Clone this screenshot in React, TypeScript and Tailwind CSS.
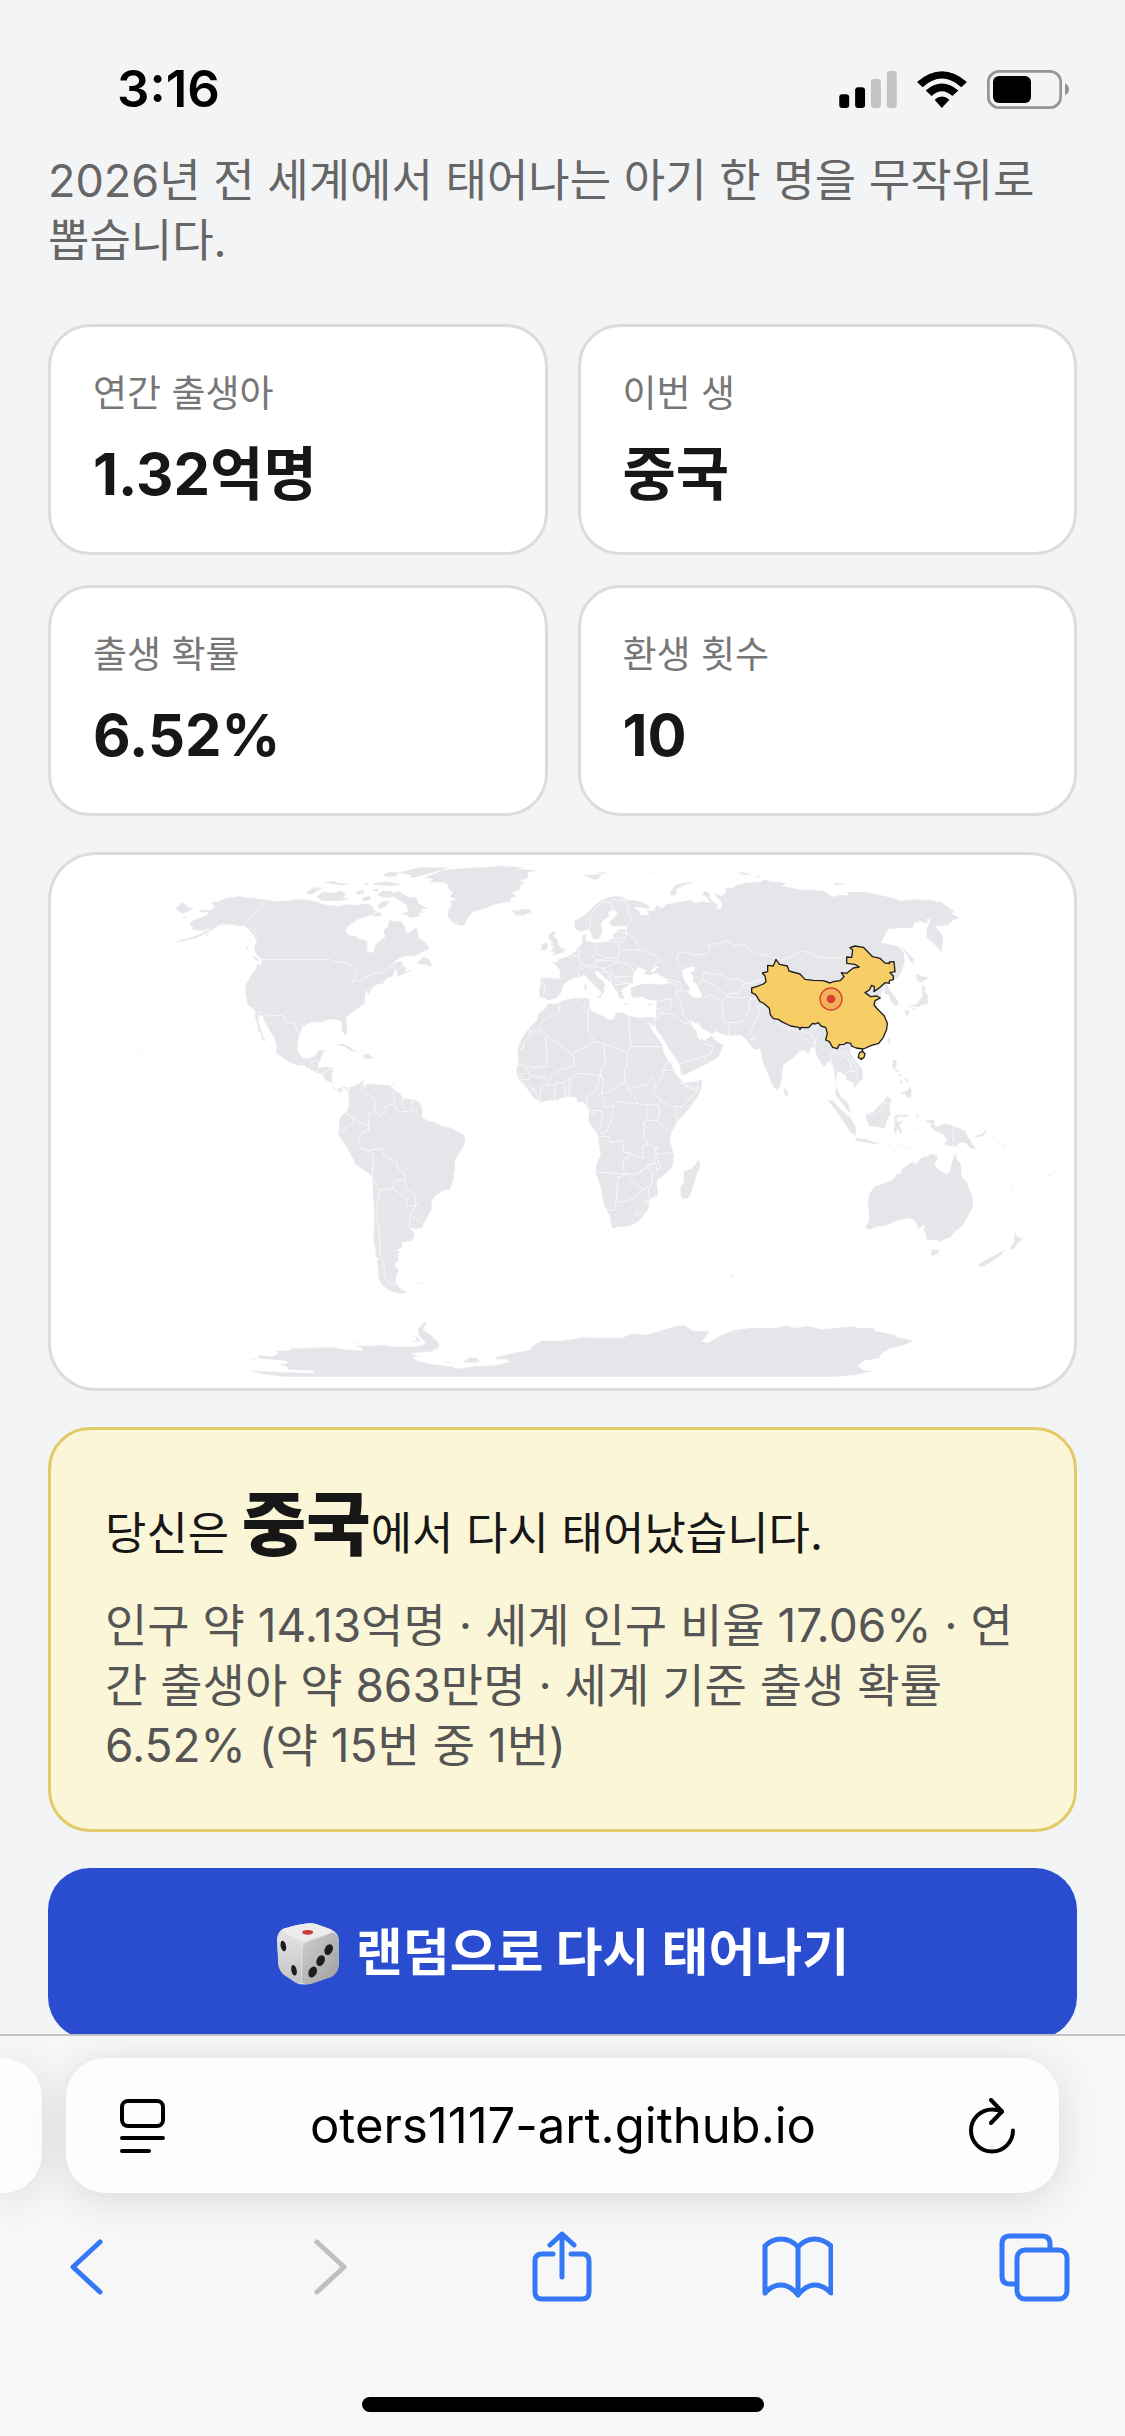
import type { ReactNode } from "react";

type Stat = { label: string; value: string };

const stats: Stat[] = [
	{ label: "연간 출생아", value: "1.32억명" },
	{ label: "이번 생", value: "중국" },
	{ label: "출생 확률", value: "6.52%" },
	{ label: "환생 횟수", value: "10" },
];

const northAmerica = [
	"M500,148L475,146 460,143 430,142 420,137 405,141 375,145 355,154 333,157 338,165 345,171 332,179 300,180 295,185 325,188 318,196 300,203 285,208 275,214 268,224 278,230 272,238 300,242 312,243 320,238 330,238 305,250 275,262 240,270 220,278 250,274 290,264 320,250 335,240 350,230 375,218 362,230 385,222 410,228 428,228 445,238 462,258 470,275 462,290 465,305 470,316 485,328 482,347 472,340 468,355 450,380 435,410 438,440 443,466 462,478 465,490 466,508 474,530 472,540 482,548 486,566 498,580 490,558 482,534 475,510 476,496 488,497 492,512 504,532 512,548 522,562 530,590 528,608 545,622 570,638 595,648 610,646 630,658 650,668 665,672 676,692 694,698 702,716 715,722 720,730 730,714 740,718 745,728 745,712 730,710 712,718 700,710 695,695 697,675 700,655 680,650 655,652 655,640 662,628 668,612 678,598 655,602 645,618 620,626 605,622 592,600 595,570 600,550 608,530 635,516 660,518 675,512 700,508 720,512 725,520 725,540 735,558 741,552 742,535 738,505 750,492 775,475 795,460 795,440 799,420 805,435 818,412 830,404 848,402 860,385 880,378 882,364 892,365 890,378 912,372 938,360 915,364 920,355 908,345 905,332 890,335 870,350 890,330 910,320 945,318 965,308 987,298 985,288 975,275 958,265 955,250 948,232 930,247 918,247 915,230 905,214 885,213 868,210 862,232 850,240 855,262 835,275 825,285 822,302 812,310 802,300 802,272 780,268 765,258 745,255 737,240 750,225 775,208 800,200 815,196 830,185 820,178 815,165 795,160 770,165 740,163 715,168 685,165 660,160 655,155 625,150 590,148 560,152 525,154Z",
	"M970,82L1000,72 1030,60 1080,55 1150,52 1200,47 1270,52 1255,57 1315,61 1285,68 1283,85 1262,92 1275,98 1258,110 1262,118 1236,128 1250,138 1230,148 1235,155 1190,162 1150,178 1120,185 1103,205 1095,222 1085,228 1060,220 1043,200 1045,180 1055,162 1048,155 1068,148 1048,140 1058,128 1046,118 1044,105 1032,98 985,96 1000,88Z",
	"M890,68L960,52 1050,52 1010,66 970,75 950,82 925,84 935,76Z",
	"M832,136L845,122 870,122 885,128 895,122 925,140 950,142 955,160 985,176 965,178 970,190 955,188 960,198 930,205 920,196 900,192 925,184 918,165 895,150 880,140 860,145Z",
	"M650,140L665,126 700,128 722,122 738,132 728,142 750,148 710,154 665,152Z",
	"M616,130L640,112 668,114 655,122 635,134Z M670,98L700,92 715,98 758,102 720,106Z M790,102L812,95 800,108Z M815,100L860,94 910,104 870,108 825,106Z M848,74L870,64 900,68 885,80 860,82Z M765,125L790,118 795,128 775,134Z M785,145L810,136 812,150 790,154Z M812,120L838,114 830,126Z M830,168L850,152 872,155 855,172 838,178Z M815,198L835,184 848,196 828,200Z",
	"M225,176L248,156 266,172 280,173 270,182 248,192Z M250,200L262,202 255,206Z M270,137L285,134 278,139Z M310,256L330,250 322,257Z M440,288L446,284 444,295 439,299Z M455,316L470,322 480,336 466,330Z",
	"M980,308L972,322 985,325 997,345 990,350 975,343 950,342Z M890,378L915,364 940,360 915,370 893,382Z",
	"M700,588L725,580 745,588 755,596 776,606 752,604 735,590 712,586Z M790,612L805,612 826,625 803,628 788,624Z M748,626L760,628 750,629Z M838,625L848,626 840,628Z M755,545L760,548 756,552Z M112,608L121,612 114,616Z M878,700L884,702 878,706Z",
	"M1235,178L1248,184 1265,177 1290,178 1296,186 1270,197 1244,194Z",
];

const southAmerica = [
	"M145,92L150,82 178,70 196,58 190,72 194,85 200,72 215,70 235,74 270,75 285,92 300,100 310,116 340,118 358,125 368,150 366,172 385,182 410,188 425,198 450,202 470,212 490,222 497,240 494,255 478,280 465,300 465,330 460,362 450,388 430,392 405,408 395,422 395,448 378,480 365,504 350,507 330,505 344,520 342,535 330,544 305,548 308,562 290,570 300,574 294,585 296,604 284,612 288,622 298,630 290,645 288,665 300,685 324,698 300,702 270,694 245,675 234,650 234,625 230,605 236,595 228,590 225,560 219,540 222,500 222,440 218,400 217,350 200,336 165,312 158,295 140,262 125,238 113,222 118,205 115,192 122,170 135,158 146,140 145,110Z",
	"M348,668L368,668 355,672Z M1290,645L1302,646 1294,651Z M278,70L284,72 278,76Z",
];

const africa = [
	"M205,460L230,462 240,455 262,448 280,445 310,444 328,445 328,460 332,480 350,490 370,498 385,508 400,508 408,488 425,487 445,497 480,503 505,500 522,502 525,515 520,530 505,515 520,545 538,570 550,590 552,610 575,645 592,680 605,688 612,698 640,695 668,688 665,715 650,745 620,785 595,810 575,845 570,870 578,900 582,915 580,945 565,965 535,988 530,1000 535,1035 510,1048 507,1075 480,1110 465,1122 440,1130 415,1130 403,1137 394,1130 390,1100 370,1060 362,1010 345,965 350,940 362,915 355,870 350,850 325,815 328,780 320,765 308,755 295,758 285,742 260,740 225,752 205,752 183,758 155,738 130,700 115,690 108,660 115,640 112,598 125,565 150,530 170,512 175,490 195,475Z",
	"M655,922L662,948 652,970 632,1035 622,1046 608,1047 601,1035 602,1010 612,995 610,965 635,955 648,940Z",
];

const eurasia = [
	"M283,210L300,205 325,185 350,160 375,145 405,138 430,140 440,150 460,150 490,157 510,170 505,177 480,172 462,172 478,182 482,194 507,196 500,180 520,183 530,165 545,175 558,163 580,158 600,155 635,150 640,158 660,158 655,152 690,158 678,140 665,135 675,122 690,132 690,145 700,155 715,165 710,178 725,172 724,155 708,140 705,128 725,138 738,125 735,112 755,115 770,105 800,98 840,95 855,88 870,94 900,96 922,100 905,108 960,118 1000,120 1030,122 1055,138 1065,140 1075,135 1105,136 1100,126 1160,126 1200,135 1240,144 1260,152 1310,148 1350,150 1382,155 1400,168 1425,187 1412,190 1440,205 1420,210 1405,225 1380,228 1362,228 1350,208 1338,208 1345,215 1335,222 1322,214 1303,220 1298,235 1270,234 1225,238 1203,278 1215,280 1235,285 1255,288 1272,310 1275,335 1265,365 1250,388 1235,390 1220,402 1230,420 1245,440 1257,458 1252,467 1240,465 1230,448 1225,435 1212,430 1215,405 1150,560 1112,598 1112,610 1132,638 1148,660 1149,685 1135,700 1122,716 1120,700 1100,690 1095,675 1078,665 1072,672 1066,700 1072,718 1085,742 1105,760 1112,788 1098,778 1085,758 1066,735 1065,690 1060,655 1048,632 1032,650 1020,635 1008,612 1005,595 995,590 985,612 972,600 958,605 945,620 910,645 905,690 900,712 892,722 880,710 862,670 848,635 840,597 825,600 812,588 800,570 780,555 745,558 718,550 710,543 695,552 665,535 655,520 645,520 632,510 640,532 650,545 652,562 664,570 664,560 672,572 695,555 698,560 705,570 732,586 722,605 715,622 685,640 640,662 608,678 602,668 600,650 590,630 572,605 550,568 530,540 522,520 528,500 528,480 530,452 505,450 485,440 460,445 452,432 452,415 470,405 500,400 530,402 560,395 540,380 455,400 430,415 425,425 435,448 418,445 412,425 405,420 395,400 375,385 355,365 345,362 350,378 372,396 378,412 370,412 374,425 362,440 362,425 345,408 325,390 315,375 300,382 285,384 265,392 250,405 245,425 230,445 205,452 195,445 180,443 177,420 183,400 180,385 205,382 238,385 240,362 232,350 216,336 235,335 235,328 260,320 280,308 298,288 306,282 306,258 318,250 318,262 316,272 345,278 380,275 398,266 400,252 412,245 412,238 440,236 440,228 415,228 395,230 388,215 405,200 412,185 395,180 385,188 388,200 368,212 362,228 370,240 362,255 360,265 340,270 328,238 300,245 285,238Z",
	"M207,252L218,243 228,246 220,258 230,265 240,290 257,298 250,308 235,312 210,318 225,308 212,304 222,292 212,285 218,278 205,265Z M182,284L200,277 205,288 198,300 178,303 185,294Z",
	"M308,72L335,74 360,72 365,78 345,90 330,85Z M345,67L395,69 365,73Z M374,84L382,84 376,87Z M510,67L530,66 520,69Z M568,130L585,105 610,98 650,94 612,106 590,118 590,135 575,137Z M765,64L800,68 815,76 790,75Z M825,78L850,78 830,83Z M1060,98L1105,103 1065,106Z M1125,104L1143,107 1130,108Z M1360,135L1365,137 1358,137Z",
	"M345,437L366,436 362,446Z M313,402L320,402 319,422 313,420Z M314,390L319,390 317,398Z M433,458L452,462 436,464Z M502,462L518,459 508,468Z",
	"M910,710L922,722 925,738 915,742Z",
];

const oceania = [
	"M508,1030L525,1008 545,1002 578,990 590,972 602,970 605,958 622,945 635,936 650,942 658,928 670,920 688,918 684,910 715,918 712,928 703,945 715,958 740,973 750,965 755,935 767,908 772,930 782,938 785,980 800,995 808,1018 820,1045 818,1070 805,1098 785,1130 765,1145 750,1163 735,1168 715,1177 712,1168 695,1172 678,1168 677,1150 670,1140 675,1122 655,1138 650,1125 642,1110 625,1105 585,1115 555,1128 530,1130 508,1140 494,1130 502,1125 508,1100 503,1060Z",
	"M695,1197L720,1200 712,1212 693,1222Z M945,1140L951,1160 970,1168 952,1180 945,1195 925,1200 938,1182 942,1170Z M915,1198L905,1215 875,1235 845,1252 831,1245 860,1228 890,1212Z",
	"M677,812L695,808 705,812 702,825 712,830 735,820 760,828 795,842 805,862 830,900 812,895 795,878 778,878 770,890 745,888 730,882 742,870 728,852 705,842 690,830 695,820 682,820Z",
	"M497,792L520,786 535,768 550,755 562,737 576,750 568,768 573,792 560,812 555,837 530,830 508,830 500,812Z M382,750L398,752 430,785 450,800 468,830 468,858 450,845 425,808 405,778Z M463,862L500,868 542,882 520,882 470,874Z",
	"M582,800L590,795 627,793 622,800 592,800 590,815 612,810 598,825 608,848 600,850 592,835 586,854 580,838 585,822Z M558,884L580,886 560,888Z M590,886L615,885 600,889Z M610,898L642,885 628,893Z M578,895L590,898 580,898Z M652,785L656,795 653,808 649,795Z M640,834L675,832 660,836Z",
	"M577,628L590,630 590,645 585,655 600,662 590,665 578,655Z M604,728L620,722 628,710 636,722 632,745 620,742 615,730 605,735Z M565,715L580,698 568,714Z M590,670L605,675 598,680Z M608,680L625,690 622,698Z M600,685L610,700 602,702Z",
	"M665,405L675,408 676,425 685,440 683,462 665,465 655,472 645,468 622,474 635,465 648,462 660,448 668,440 665,420Z M648,370L665,378 686,382 665,398 650,390Z M612,480L628,482 625,498 618,497Z M635,473L648,472 640,480Z M602,288L625,310 642,328 640,338 652,352 632,335 622,318Z M680,235L692,208 705,225 715,240 730,262 725,307 705,285 680,262Z M565,560L571,565 569,585 563,575Z",
	"M820,858L845,852 855,842 845,830 860,845 850,858 830,862Z M875,850L882,865 876,858Z M890,868L905,878 895,876Z M905,880L925,892 912,888Z M928,1000L945,1016 935,1012Z M1043,972L1055,970 1046,977Z M1055,965L1067,961 1060,967Z M960,945L964,955 961,952Z M92,1274L103,1276 94,1281Z",
];

const antarctica = [
	"M30,212L110,217 168,218 172,213 112,209 108,200 88,193 110,190 108,184 80,180 44,176 38,166 75,168 90,160 80,154 115,150 120,145 215,142 240,148 282,152 280,144 262,136 300,138 325,134 345,139 395,140 420,136 428,125 412,108 410,88 425,66 432,66 422,88 440,104 460,132 456,145 440,155 395,160 412,170 398,172 405,180 440,192 490,200 503,206 540,198 590,196 620,186 615,178 588,178 590,172 610,165 640,156 670,150 672,140 695,122 740,122 790,112 880,114 905,100 935,104 970,92 1005,77 1025,76 1045,92 1082,94 1075,110 1065,124 1078,128 1110,105 1140,90 1180,83 1235,84 1260,75 1275,84 1312,78 1340,88 1420,78 1422,84 1460,84 1465,93 1510,104 1515,112 1553,121 1535,134 1500,146 1480,160 1475,175 1440,182 1425,196 1435,210 1460,213 1420,225 1370,231 105,231 60,224 22,213Z",
	"M390,124L408,120 400,102 416,120 412,125Z M262,126L288,127 270,129Z M442,58L450,54 447,58Z M512,188L530,172 545,173 554,183 545,188Z M465,188L482,184 485,189Z M22,174L45,178 30,179Z M172,139L190,139 180,141Z",
];

const northAmericaBorders = [
	"M500,148L430,226 445,238 462,232 465,252 475,265 463,276",
	"M485,328L690,328 695,333 735,338 755,348 768,362 768,380 755,398 790,388 822,370 855,366 868,350 885,348 885,365",
	"M462,487L480,486 510,498 548,496 555,510 568,520 582,516 592,545 602,552",
	"M628,655L632,640 642,632 655,630 M650,665L660,652 M665,672L685,660 697,658 M678,692L690,697",
];

const southAmericaBorders = [
	"M195,62L183,80 188,100 222,112 226,155 240,165 260,156 252,140 280,132 285,120 278,98",
	"M205,212L208,158 226,155 M280,132L292,155 320,155 350,150 358,135 M308,116L306,140 318,155 M335,118L338,150",
	"M133,160L160,172 160,188 138,205 130,218 118,212 M160,172L188,193 205,196 205,212 185,218 175,242 182,265 205,272 217,280 220,300 216,350",
	"M205,272L245,265 250,285 290,305 295,328 312,338 315,360 285,362 278,386 238,390 216,350",
	"M278,386L305,405 322,418 318,436 345,438 348,405 320,388 315,360 M345,438L355,425 M350,432L330,463 368,490 M330,463L328,505",
	"M238,390L232,430 232,480 238,520 240,580 252,615 253,650 270,670 290,673",
];

const africaBorders = [
	"M240,455L238,485 215,495 180,520 180,540 150,542 148,560 132,575 130,595 112,598 M155,552L180,552",
	"M180,540L275,612 M197,560L203,650 150,652 M275,612L345,575 372,582 442,608 M328,470L322,490 325,545 345,575 M275,612L283,620 280,650 245,658 215,675 203,700",
	"M315,455L310,475 328,498 M445,497L450,560 452,590 548,590 M452,590L442,608 442,650 433,655 435,695 M372,582L375,640 362,665 370,690",
	"M112,642L140,650 148,675 200,685 M112,672L130,672 M112,680L132,682 M150,680L145,688 118,690 M140,715L148,705 158,712 155,730 M160,715L170,735 183,758 M180,750L182,705 225,705 M222,752L228,698 252,698 258,740 M252,698L268,685 265,738 M270,735L275,690 283,670 362,675 350,720 320,740 320,762",
	"M362,675L372,695 365,725 378,730 435,695 445,715 475,762 410,755 400,768 375,770 365,725 M445,715L500,705 518,685 525,700 520,725 540,750 535,765 475,762",
	"M548,590L565,630 548,665 550,672 528,710 M548,662L580,660 608,695 625,715 652,722 M608,695L600,700 652,720 655,692 M652,722L605,770 575,770 540,750 M605,770L590,770 590,815",
	"M535,765L540,795 530,812 500,812 500,765 M530,812L570,845 M500,812L490,820 492,860 503,882 535,895 M330,780L362,782 368,800 362,835 345,845 M400,768L398,800 380,845 355,850 M330,792L342,792 342,780",
	"M352,860L385,860 392,878 428,870 430,905 445,908 492,925 485,890 503,882 M430,905L445,908 445,925 430,925 430,960 440,970 465,975 498,952 522,940 525,895 535,895",
	"M345,965L372,968 440,972 430,978 415,980 410,1025 405,1080 385,1080 M410,1025L415,1058 455,1048 490,1018 505,1012 M440,972L470,1005 490,1018 M465,975L498,952 518,965 515,1000 505,1015 508,1050",
	"M535,912L580,908 M525,895L535,930 540,950 532,962 528,940 498,945 M490,815L500,830 490,840 M463,1092L472,1078 482,1085 475,1097 466,1097Z M495,1055L502,1048 507,1060 498,1065Z",
];

const eurasiaBorders = [
	"M325,238L332,225 330,200 350,170 370,155 395,158 400,178 M395,158L400,148 425,155 430,145 M430,145L445,170 442,190 457,208 440,228 M440,228L438,248 470,272 475,290 482,300 530,318 542,330 515,350",
	"M400,262L435,265 440,248 412,245 M398,268L425,278 435,265 M385,275L415,278 420,305 415,320 385,325 350,312 348,285 M420,300L482,300 M415,320L412,335 375,330 345,330 338,318 350,312 M300,290L298,320 305,345 340,345 345,330",
	"M272,315L300,322 M275,308L295,300 M305,345L292,355 298,380 M300,358L320,350 345,352 M345,352L350,335 375,330 M350,352L375,355 410,338 445,340 465,365 M375,355L368,365 395,365 405,382 455,378 M365,355L385,375 395,400 M395,365L390,385 405,400 M405,382L418,395 450,400 M405,405L430,402 450,400",
	"M188,398L195,402 192,430 188,443 M205,382L245,388",
	"M590,325L595,312 610,305 645,315 680,312 690,298 682,285 720,280 740,272 765,288 790,282 830,312 860,315 885,325 905,330 950,315 960,302 985,308 1010,320 1060,325 1100,320",
	"M590,325L600,345 615,355 M640,400L655,405 668,390 668,365 700,375 720,370 745,390 775,385 800,400 850,388 M668,390L700,405 745,440 M745,440L745,430 775,432 790,402 820,400 M790,412L805,412",
	"M540,382L595,395 605,405 M560,395L590,405 590,425 605,425 M605,405L600,418 628,425 M590,440L588,425 M588,428L605,460 608,490 630,520 M530,455L590,442",
	"M575,445L572,472 540,492 528,510 M540,492L575,490 615,520 630,522 M528,475L545,480 M630,522L640,528 M600,640L640,630 672,620 695,610 698,588 672,582 M672,620L683,640",
	"M670,445L690,435 725,452 728,480 728,508 748,520 745,558 M748,518L785,515 805,485 808,450 835,442 M728,455L745,440 775,445 805,440 825,450 M808,568L825,565 810,545 840,490 830,470 855,465",
	"M888,512L900,525 955,545 968,540 M968,540L965,560 995,580 M968,545L995,550 1005,590 M990,535L1020,530 1040,525 M1005,595L1005,570 1020,545",
	"M1060,605L1050,615 1058,650 1068,670 M1060,605L1085,615 1110,635 1118,665 1135,665 1130,690 M1078,605L1095,612 M1095,670L1105,665 1118,665 M1090,600L1110,620 1135,660",
];

const oceaniaBorders = ["M760,828V888", "M500,792L520,794 545,778 550,760 572,760"];

const china =
	"M228,328L238,343 262,348 267,363 300,372 315,388 340,391 370,392 390,399 400,395 420,392 432,380 424,368 440,370 460,354 478,351 465,343 440,340 440,321 455,322 458,300 450,293 465,288 490,292 518,320 540,325 555,339 568,341 568,336 582,335 585,365 570,368 580,378 580,389 568,392 568,400 555,398 540,412 522,425 523,410 515,406 508,420 495,428 512,440 530,438 541,444 525,452 522,465 535,480 553,498 562,520 560,538 550,562 536,580 515,586 490,597 468,594 455,588 452,580 440,578 433,583 418,584 412,596 398,592 388,575 377,570 382,550 377,532 363,528 355,518 345,522 338,520 325,533 303,532 300,539 297,532 272,528 245,515 235,508 220,506 211,494 208,475 190,459 180,455 167,434 155,428 155,414 170,410 190,402 198,395 195,378 187,369 203,365 203,346 220,348Z";

const land = "fill-[#e5e6ea] stroke-white stroke-[1px]";
const border = "fill-none stroke-white stroke-[2px]";

const Shapes = ({ paths, className }: { paths: string[]; className: string }) => (
	<>
		{paths.map((d) => (
			<path key={d} d={d} className={className} strokeLinejoin="round" />
		))}
	</>
);

const WorldMap = () => (
	<svg viewBox="0 0 1023 533" className="block w-full h-auto" role="img" aria-label="세계 지도">
		<g transform="translate(49 -5) scale(.33333)">
			<Shapes paths={northAmerica} className={land} />
			<Shapes paths={northAmericaBorders} className={border} />
		</g>
		<g transform="translate(249 205) scale(.33333)">
			<Shapes paths={southAmerica} className={land} />
			<Shapes paths={southAmericaBorders} className={border} />
		</g>
		<g transform="translate(429 -5) scale(.33333)">
			<Shapes paths={eurasia} className={land} />
			<Shapes paths={africa} className={land} />
			{/* Black Sea and Caspian Sea */}
			<path
				d="M460,398L458,385 462,368 475,350 488,358 500,360 492,370 505,376 520,372 530,370 560,388 565,400 540,404 510,398 485,402 468,406Z M510,362L528,348 535,352 520,366Z M605,362L625,352 642,350 645,362 630,368 640,380 638,395 650,405 665,432 664,444 640,442 625,430 630,415 612,390Z"
				fill="white"
			/>
			<Shapes paths={eurasiaBorders} className={border} />
			<Shapes paths={africaBorders} className={border} />
		</g>
		<g transform="translate(189 445) scale(.43367 .33333)">
			<Shapes paths={antarctica} className={land} />
		</g>
		<g transform="translate(649 -5) scale(.33333)">
			<Shapes paths={oceania} className={land} />
			<Shapes paths={oceaniaBorders} className={border} />
			<path d={china} fill="#f7ce65" stroke="#1f1f1f" strokeWidth="4" strokeLinejoin="round" />
			<path
				d="M487,597V605M478,608L488,604 495,612 492,622 484,628 475,622Z"
				fill="#f7ce65"
				stroke="#1f1f1f"
				strokeWidth="4"
			/>
			<circle cx="393" cy="447" r="33" fill="#e0433033" stroke="#d8432f" strokeWidth="4" />
			<circle cx="393" cy="447" r="13" fill="#d8432f" />
		</g>
	</svg>
);

const StatusBar = () => (
	<header className="flex items-center justify-between h-[151px] pt-[28px] pl-[117px] pr-[56px] shrink-0">
		<time className="text-[51px] font-semibold text-black">3:16</time>
		<div className="flex items-center gap-5">
			<svg viewBox="30 44 174 112" className="w-[58px] h-[37px]" aria-hidden="true">
				<rect x="30" y="114" width="30" height="42" rx="9" />
				<rect x="78" y="93" width="30" height="63" rx="9" />
				<rect x="126" y="68" width="30" height="88" rx="9" fill="#c2c3c5" />
				<rect x="174" y="44" width="30" height="112" rx="9" fill="#c2c3c5" />
			</svg>
			<svg viewBox="262 44 151 112" className="w-[50px] h-[37px]" aria-hidden="true">
				<path d="M262,77Q337,12 413,77L396,93Q337,41 279,93Z" />
				<path d="M288,103Q337,61 387,103L369,120Q337,91 306,120Z" />
				<path d="M315,131Q337,112 360,131L337,156Z" />
			</svg>
			<svg viewBox="471 42 246 117" className="w-[82px] h-[39px]" aria-hidden="true">
				<rect x="475" y="46" width="217" height="109" rx="32" fill="none" stroke="#939496" strokeWidth="8" />
				<rect x="489" y="60" width="114" height="81" rx="18" />
				<path d="M705,82Q717,88 717,100Q717,113 705,118Z" fill="#939496" />
			</svg>
		</div>
	</header>
);

const StatCard = ({ label, value }: Stat) => (
	<div className="bg-white border-3 border-[#dcdcdc] rounded-[42px] p-[42px]">
		<dt className="text-[37px] leading-[50px] text-[#777777]">{label}</dt>
		<dd className="mt-5 text-[58px] leading-[71px] font-bold text-[#171717]">{value}</dd>
	</div>
);

const Dice = () => (
	<svg viewBox="80 99 192 192" className="size-[64px]" aria-hidden="true">
		<defs>
			<linearGradient id="dice-left" x1="0" y1="0" x2="0" y2="1">
				<stop offset="0" stopColor="#e2e2e2" />
				<stop offset="1" stopColor="#c4c4c4" />
			</linearGradient>
			<linearGradient id="dice-right" x1="0" y1="0" x2="1" y2="1">
				<stop offset="0" stopColor="#cfcfcf" />
				<stop offset="1" stopColor="#9f9f9f" />
			</linearGradient>
		</defs>
		<path
			d="M102,119Q140,107 176,103Q190,101 202,106L244,121Q268,131 268,154V228Q266,252 246,263L190,283Q160,291 140,281L104,257Q90,246 87,226L83,155Q83,127 102,119Z"
			fill="#dedede"
		/>
		<path d="M84,148Q88,132 104,136L142,157Q154,164 155,180L156,276Q156,288 140,281L104,257Q90,246 87,226Z" fill="url(#dice-left)" />
		<path d="M160,178Q163,162 180,157L248,132Q266,130 268,154V228Q266,252 246,263L190,283Q166,290 158,280Z" fill="url(#dice-right)" />
		<path d="M102,119Q140,107 176,103Q190,101 202,106L244,121Q252,126 240,132L178,154Q160,160 148,153L104,132Q94,126 102,119Z" fill="#ececec" />
		<ellipse cx="175" cy="130" rx="16" ry="7" fill="#cc3b32" />
		<g fill="#1d1d1f">
			<ellipse cx="102" cy="171" rx="8" ry="16" transform="rotate(-12 102 171)" />
			<ellipse cx="134" cy="244" rx="8" ry="16" transform="rotate(-12 134 244)" />
			<ellipse cx="238" cy="182" rx="12" ry="17" transform="rotate(25 238 182)" />
			<ellipse cx="214" cy="215" rx="12" ry="17" transform="rotate(25 214 215)" />
			<ellipse cx="190" cy="249" rx="12" ry="17" transform="rotate(25 190 249)" />
		</g>
	</svg>
);

const ToolbarButton = ({
	label,
	disabled,
	children,
}: {
	label: string;
	disabled?: boolean;
	children: ReactNode;
}) => (
	<button
		type="button"
		aria-label={label}
		disabled={disabled}
		className="size-[72px] text-[#3478f6] disabled:text-[#bfbfc1]"
	>
		<svg
			viewBox="0 0 72 72"
			className="size-full"
			fill="none"
			stroke="currentColor"
			strokeWidth="5"
			strokeLinecap="round"
			strokeLinejoin="round"
			aria-hidden="true"
		>
			{children}
		</svg>
	</button>
);

const BrowserBar = () => (
	<footer className="shrink-0 bg-[#f7f7f7] border-t-2 border-[#c0c1c3] overflow-hidden">
		<div className="flex gap-6 pt-[22px] pr-[66px]">
			<div className="w-[42px] h-[135px] bg-[#fdfdfd] rounded-r-[39px] shadow-[0_6px_40px_rgba(0,0,0,0.12)]" />
			<div className="flex flex-1 items-center h-[135px] px-[43px] bg-[#fdfdfd] rounded-[39px] shadow-[0_6px_40px_rgba(0,0,0,0.12)]">
				<button type="button" aria-label="페이지 메뉴" className="py-2 pl-[9px] pr-2">
					<svg
						viewBox="0 0 48 56"
						className="w-[48px] h-[56px]"
						fill="none"
						stroke="black"
						strokeWidth="4"
						strokeLinecap="round"
						aria-hidden="true"
					>
						<rect x="4" y="3" width="41" height="25" rx="6" />
						<path d="M4,40H45M4,53H31" />
					</svg>
				</button>
				<input
					readOnly
					aria-label="주소"
					value="oters1117-art.github.io"
					className="flex-1 min-w-0 text-center text-[49px] text-black bg-transparent outline-none"
				/>
				<button type="button" aria-label="새로고침" className="py-2 pl-4">
					<svg
						viewBox="0 0 48 56"
						className="w-[48px] h-[56px]"
						fill="none"
						stroke="black"
						strokeWidth="4"
						strokeLinecap="round"
						strokeLinejoin="round"
						aria-hidden="true"
					>
						<path d="M34,13.500Q29,11.500 24,11.500A21,21 0 1 0 45,32.500" />
						<path d="M23,2L34,13.500L23,25" />
					</svg>
				</button>
			</div>
		</div>
		<nav className="flex justify-between pt-[38px] pl-[50px] pr-[55px]">
			<ToolbarButton label="뒤로">
				<path d="M50,11L23,36L50,61" />
			</ToolbarButton>
			<ToolbarButton label="앞으로" disabled>
				<path d="M30,11L57,36L30,61" />
			</ToolbarButton>
			<ToolbarButton label="공유">
				<path d="M29,23H18Q11,23 11,30V61Q11,68 18,68H58Q65,68 65,61V30Q65,23 58,23H47M38,46V3M26,14L38,3L50,14" />
			</ToolbarButton>
			<ToolbarButton label="책갈피">
				<path d="M37,16V64Q29,54 20,54Q11,54 4,62V15Q11,8 20,8Q30,8 37,16Q44,8 54,8Q62,8 70,15V62Q62,54 54,54Q45,54 37,64" />
			</ToolbarButton>
			<ToolbarButton label="탭">
				<rect x="19" y="19" width="50" height="49" rx="8" />
				<path d="M17,53H12Q4,53 4,45V13Q4,5 12,5H44Q52,5 52,13V17" />
			</ToolbarButton>
		</nav>
		<div className="pt-[94px] pb-6">
			<div className="w-[402px] h-[15px] mx-auto rounded-full bg-black" />
		</div>
	</footer>
);

const App = () => {
	return (
		<div className="flex flex-col h-screen bg-[#f3f4f6] font-['Inter','Noto_Sans_CJK_KR',sans-serif]">
			<StatusBar />
			<main className="flex-1 min-h-0 overflow-hidden px-12">
				<p className="text-[45px] leading-[60px] text-[#666666]">
					2026년 전 세계에서 태어나는 아기 한 명을 무작위로 뽑습니다.
				</p>

				<dl className="grid grid-cols-2 gap-[30px] mt-[53px]">
					{stats.map((stat) => (
						<StatCard key={stat.label} {...stat} />
					))}
				</dl>

				<section className="mt-9 bg-white border-3 border-[#dcdcdc] rounded-[48px] overflow-hidden">
					<WorldMap />
				</section>

				<section className="mt-9 bg-[#fcf6d9] border-3 border-[#e2ca69] rounded-[42px] p-[54px]">
					<p className="text-[45px] leading-[99px] text-[#171717]">
						당신은 <strong className="text-[70px] leading-none font-extrabold">중국</strong>에서 다시
						태어났습니다.
					</p>
					<p className="mt-3 text-[46px] leading-[60px] text-[#555555]">
						인구 약 14.13억명 · 세계 인구 비율 17.06% · 연간 출생아 약 863만명 · 세계 기준 출생 확률
						6.52% (약 15번 중 1번)
					</p>
				</section>

				<button
					type="button"
					className="flex items-center justify-center gap-4 w-full h-[171px] mt-9 rounded-[42px] bg-[#2a4dd0] text-white text-[51px] font-bold"
				>
					<Dice />
					랜덤으로 다시 태어나기
				</button>
			</main>
			<BrowserBar />
		</div>
	);
};

export default App;
